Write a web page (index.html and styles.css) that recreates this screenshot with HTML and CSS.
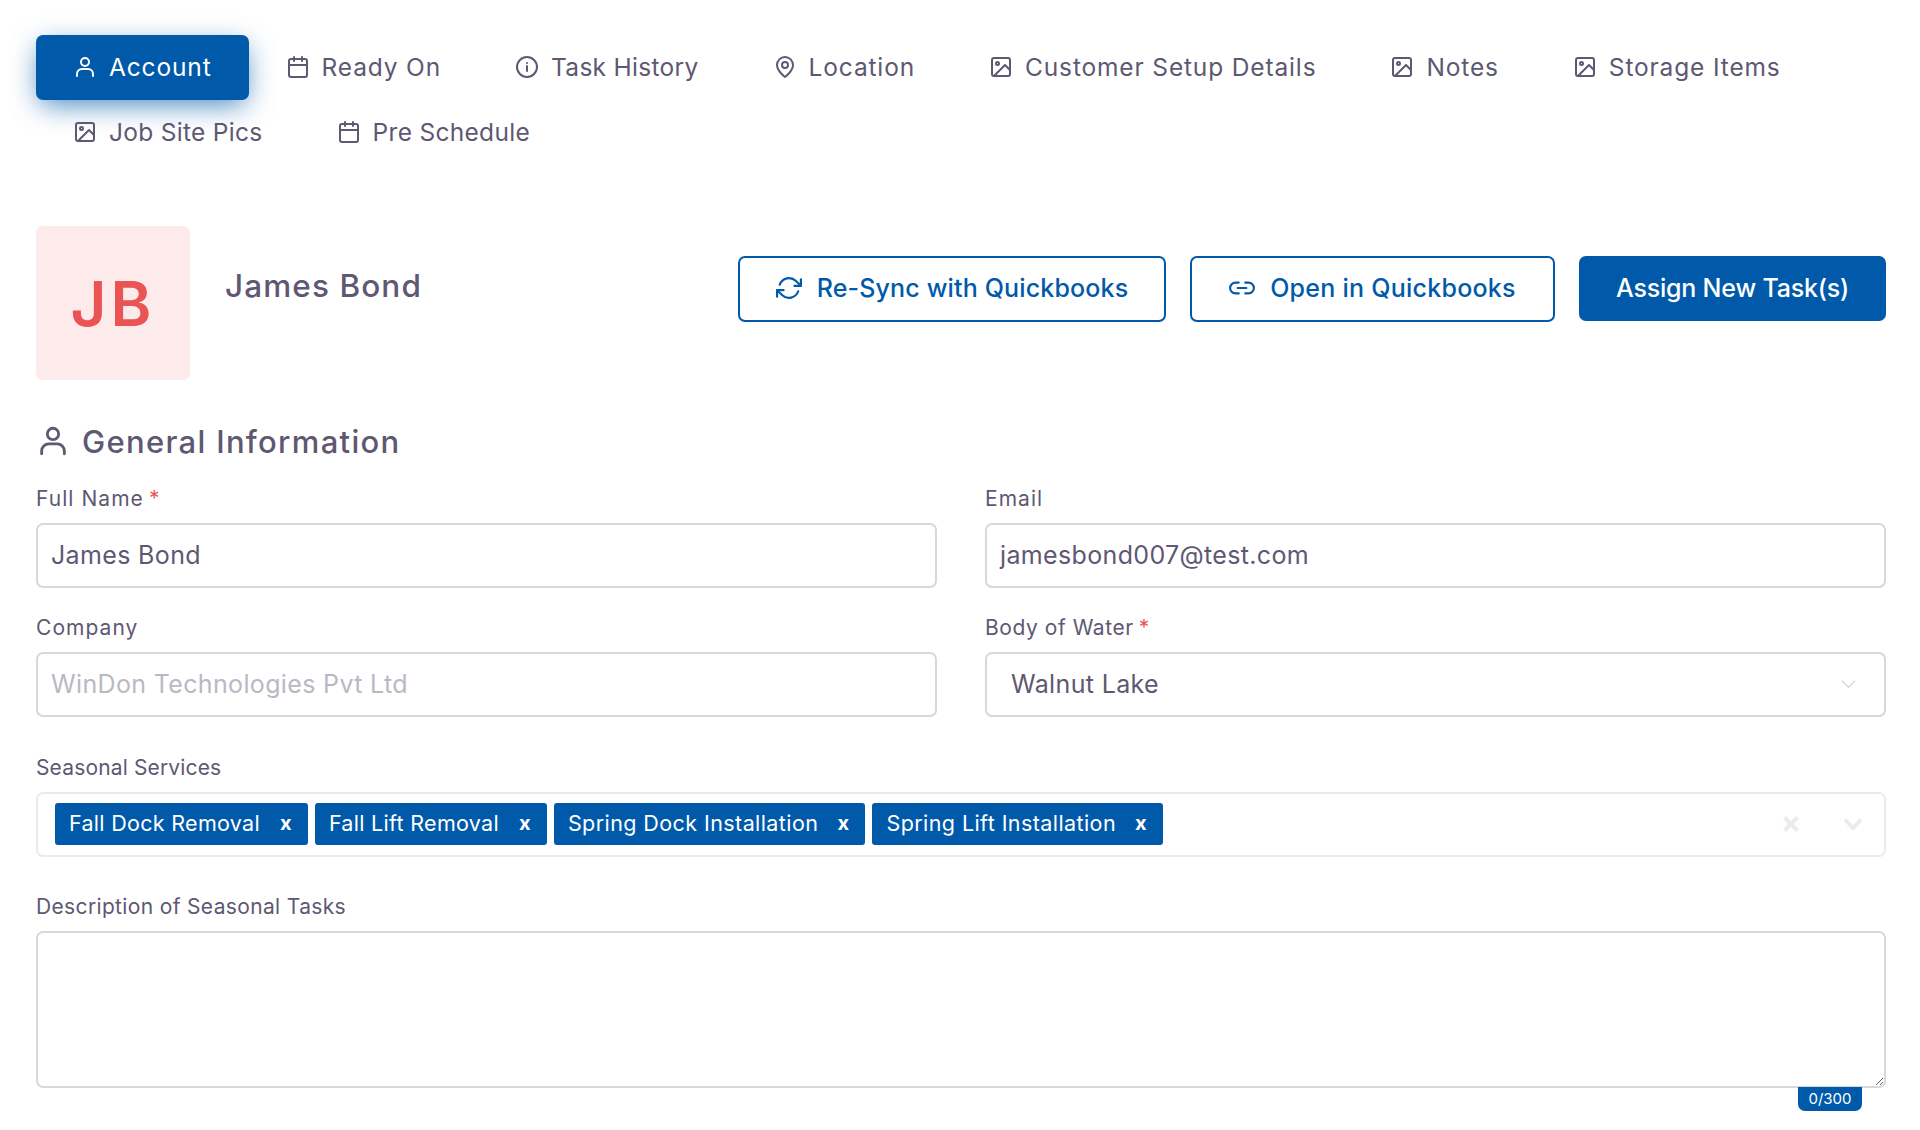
FILE: index.html
```html
<!DOCTYPE html>
<html>
<head>
  <title>James Bond - Account</title>
  <link rel="stylesheet" href="styles.css">
</head>
<body>

<svg class="sprites" width="0" height="0">
  <symbol id="i-user" viewBox="0 0 24 24"><circle cx="12" cy="7" r="4"/><path d="M4 21v-2a5 5 0 0 1 5-5h6a5 5 0 0 1 5 5v2"/></symbol>
  <symbol id="i-cal" viewBox="0 0 24 24"><rect x="3" y="4" width="18" height="18" rx="2"/><path d="M16 2v4M8 2v4M3 10h18"/></symbol>
  <symbol id="i-info" viewBox="0 0 24 24"><circle cx="12" cy="12" r="10"/><path d="M12 16v-5M12 8h.01"/></symbol>
  <symbol id="i-pin" viewBox="0 0 24 24"><path d="M20 10c0 6-8 12-8 12s-8-6-8-12a8 8 0 0 1 16 0z"/><circle cx="12" cy="10" r="3"/></symbol>
  <symbol id="i-image" viewBox="0 0 24 24"><rect x="3" y="3" width="18" height="18" rx="2"/><circle cx="8.5" cy="8.5" r="1.5"/><path d="M21 15l-5-5L5 21"/></symbol>
  <symbol id="i-sync" viewBox="0 0 24 24"><path d="M23 4v6h-6M1 20v-6h6"/><path d="M3.5 9a9 9 0 0 1 14.9-3.4L23 10M1 14l4.6 4.4A9 9 0 0 0 20.5 15"/></symbol>
  <symbol id="i-link" viewBox="0 0 24 24"><path d="M15 7h3a5 5 0 0 1 0 10h-3M9 17H6A5 5 0 0 1 6 7h3M8 12h8"/></symbol>
</svg>

<div class="page">

  <nav class="tabs">
    <a class="tab active"><svg class="icon"><use href="#i-user"/></svg>Account</a>
    <a class="tab"><svg class="icon"><use href="#i-cal"/></svg>Ready On</a>
    <a class="tab tight"><svg class="icon"><use href="#i-info"/></svg>Task History</a>
    <a class="tab"><svg class="icon"><use href="#i-pin"/></svg>Location</a>
    <a class="tab"><svg class="icon"><use href="#i-image"/></svg>Customer Setup Details</a>
    <a class="tab"><svg class="icon"><use href="#i-image"/></svg>Notes</a>
    <a class="tab"><svg class="icon"><use href="#i-image"/></svg>Storage Items</a>
    <a class="tab tight"><svg class="icon"><use href="#i-image"/></svg>Job Site Pics</a>
    <a class="tab tight"><svg class="icon"><use href="#i-cal"/></svg>Pre Schedule</a>
  </nav>

  <div class="profile">
    <div class="avatar">JB</div>
    <div class="name">James Bond</div>
    <div class="actions">
      <button class="btn btn-outline sync"><svg class="icon"><use href="#i-sync"/></svg>Re-Sync with Quickbooks</button>
      <button class="btn btn-outline open"><svg class="icon"><use href="#i-link"/></svg>Open in Quickbooks</button>
      <button class="btn btn-solid">Assign New Task(s)</button>
    </div>
  </div>

  <h3 class="section-title"><svg class="icon"><use href="#i-user"/></svg>General Information</h3>

  <form class="form-grid">
    <div class="field top">
      <label class="spaced">Full Name<span class="req">*</span></label>
      <div class="input">James Bond</div>
    </div>
    <div class="field top">
      <label class="spaced">Email</label>
      <div class="input">jamesbond007@test.com</div>
    </div>
    <div class="field">
      <label class="spaced">Company</label>
      <div class="input muted">WinDon Technologies Pvt Ltd</div>
    </div>
    <div class="field">
      <label class="roomy">Body of Water<span class="req">*</span></label>
      <div class="input select">Walnut Lake
        <svg class="chev" viewBox="0 0 16 10"><path d="M1 1.5l7 7 7-7"/></svg>
      </div>
    </div>
    <div class="field wide">
      <label class="narrow">Seasonal Services</label>
      <div class="multi">
        <span class="chip">Fall Dock Removal<b>x</b></span>
        <span class="chip">Fall Lift Removal<b>x</b></span>
        <span class="chip long">Spring Dock Installation<b>x</b></span>
        <span class="chip long">Spring Lift Installation<b>x</b></span>
        <div class="multi-icons">
          <svg class="clear" viewBox="0 0 18 18"><path d="M2.5 2.5l13 13M15.500 2.500l-13 13"/></svg>
          <svg class="drop" viewBox="0 0 20 14"><path d="M2 2.500l8 8.500 8-8.500"/></svg>
        </div>
      </div>
    </div>
    <div class="field wide">
      <label>Description of Seasonal Tasks</label>
      <div class="textarea-wrap">
        <textarea class="textarea"></textarea>
        <span class="counter">0/300</span>
      </div>
    </div>
  </form>

</div>

</body>
</html>
```

FILE: styles.css
```css
* {
  box-sizing: border-box;
}

body {
  margin: 0;
  background: #fff;
  font-family: "Inter", "Noto Sans", sans-serif;
  color: #5e5873;
  overflow: hidden;
}

.sprites {
  position: absolute;
}

.icon {
  fill: none;
  stroke: currentColor;
  stroke-width: 2;
  stroke-linecap: round;
  stroke-linejoin: round;
  flex: none;
}

.page {
  padding: 35px 34px 0 36px;
}

/* tabs */
.tabs {
  display: flex;
  flex-wrap: wrap;
}

.tab {
  display: flex;
  align-items: center;
  height: 65px;
  padding: 0 37px 2px;
  font-size: 24.5px;
  letter-spacing: 0.85px;
  color: #5e5873;
}

.tab.tight {
  letter-spacing: 0.3px;
}

.tab .icon {
  width: 24px;
  height: 24px;
  margin-right: 12px;
}

.tab.active {
  background: #005aa9;
  color: #fff;
  border-radius: 7px;
  box-shadow: 0 8px 28px -4px rgba(0, 90, 169, 0.75);
}

/* profile row */
.profile {
  display: flex;
  margin-top: 61px;
}

.avatar {
  width: 154px;
  height: 154px;
  border-radius: 7px;
  background: #fdeaea;
  color: #ea5455;
  font-size: 62px;
  font-weight: 600;
  letter-spacing: 4px;
  display: flex;
  align-items: center;
  justify-content: center;
}

.name {
  margin-left: 35px;
  margin-top: 40px;
  font-size: 31.500px;
  letter-spacing: 1.1px;
  line-height: 40px;
  font-weight: 500;
}

.actions {
  display: flex;
  gap: 24px;
  margin-left: auto;
  margin-top: 30px;
  align-items: flex-start;
}

.btn {
  display: flex;
  align-items: center;
  justify-content: center;
  height: 66px;
  border-radius: 7px;
  font-family: inherit;
  font-size: 25px;
  font-weight: 500;
  letter-spacing: 0.25px;
  padding: 0 0 2px;
}

.btn .icon {
  width: 26px;
  height: 26px;
  margin-right: 15px;
}

.btn-outline {
  background: #fff;
  border: 2px solid #005aa9;
  color: #005aa9;
}

.btn-solid {
  background: #005aa9;
  border: 0;
  color: #fff;
  height: 65px;
  width: 307px;
  letter-spacing: -0.2px;
}

.sync {
  width: 428px;
  letter-spacing: 0.15px;
}

.open {
  width: 365px;
}

/* section */
.section-title {
  display: flex;
  align-items: center;
  margin: 41px 0 0;
  height: 40px;
  font-size: 31px;
  letter-spacing: 1.3px;
  font-weight: 500;
}

.section-title .icon {
  width: 34px;
  height: 34px;
  margin-right: 12px;
}

.form-grid {
  display: grid;
  grid-template-columns: 1fr 1fr;
  column-gap: 48px;
  margin-top: 23px;
}

.field {
  margin-bottom: 36px;
}

.field.top {
  margin-bottom: 25px;
}

.field.wide {
  grid-column: 1 / 3;
  margin-bottom: 35px;
}

.field label {
  display: block;
  height: 30px;
  font-size: 21px;
  letter-spacing: 0.35px;
  line-height: 30px;
  margin-bottom: 9px;
}

.field label.spaced {
  letter-spacing: 1.05px;
}

.field label.roomy {
  letter-spacing: 0.55px;
}

.field label.narrow {
  letter-spacing: 0.15px;
}

.req {
  color: #ea5455;
  margin-left: 5px;
}

.input {
  height: 65px;
  border: 2px solid #d8d6de;
  border-radius: 7px;
  padding: 0 13px 1px;
  display: flex;
  align-items: center;
  font-size: 25px;
  letter-spacing: 0.35px;
}

.input.muted {
  color: #b9b9c3;
}

.input.select {
  padding-left: 24px;
  justify-content: space-between;
}

.chev {
  width: 15px;
  height: 10px;
  margin-right: 15px;
  fill: none;
  stroke: #d8d6de;
  stroke-width: 1.5;
}

.multi {
  display: flex;
  align-items: center;
  gap: 7px;
  height: 65px;
  padding: 0 17px 2px;
  border: 2px solid #ebebeb;
  border-radius: 7px;
}

.chip {
  display: flex;
  align-items: center;
  justify-content: space-between;
  height: 42px;
  padding: 0 16px 2px 14px;
  background: #005aa9;
  color: #fff;
  border-radius: 3px;
  font-size: 21.5px;
  letter-spacing: 0.3px;
}

.chip.long {
  letter-spacing: 0.42px;
}

.chip b {
  font-size: 20px;
  font-weight: 700;
  margin-left: 20px;
}

.chip.long b {
  margin-left: 19px;
}

.multi-icons {
  display: flex;
  align-items: center;
  margin-left: auto;
  gap: 43px;
  margin-right: 4px;
}

.clear {
  width: 18px;
  height: 18px;
  fill: none;
  stroke: #ebebeb;
  stroke-width: 4;
}

.drop {
  width: 20px;
  height: 14px;
  fill: none;
  stroke: #ebebeb;
  stroke-width: 4;
}

.textarea-wrap {
  position: relative;
}

.textarea {
  display: block;
  width: 100%;
  height: 157px;
  border: 2px solid #d8d6de;
  border-radius: 7px;
  background: #fff;
}

.counter {
  position: absolute;
  top: 156px;
  right: 24px;
  width: 64px;
  height: 24px;
  background: #005aa9;
  color: #fff;
  border-radius: 0 0 7px 7px;
  font-size: 15px;
  line-height: 24px;
  text-align: center;
}
```
